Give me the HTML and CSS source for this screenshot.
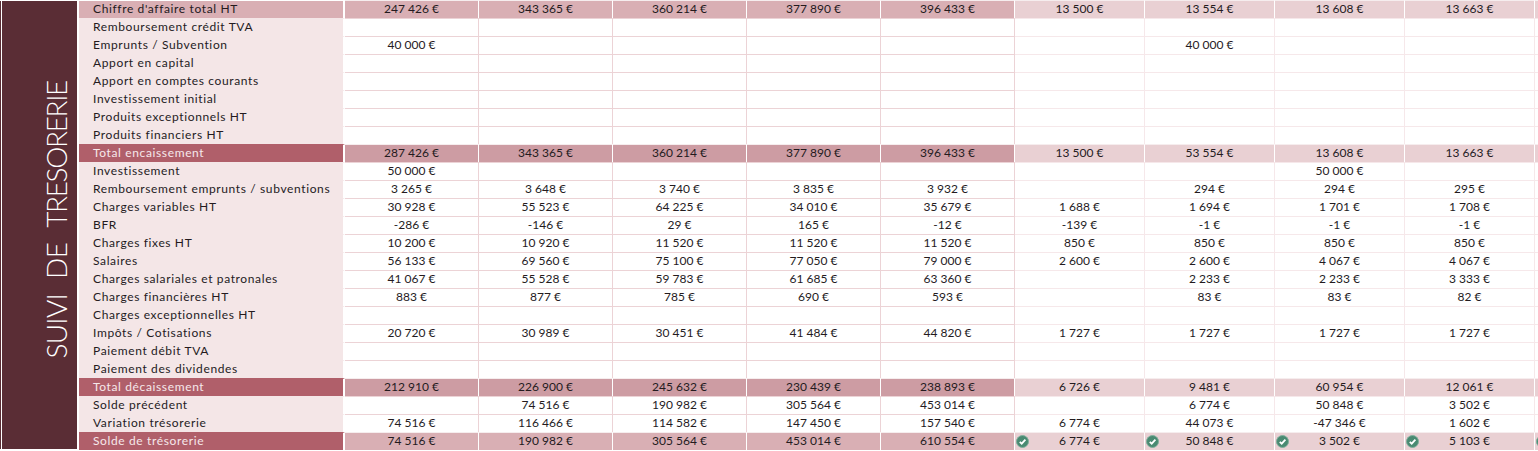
FILE: index.html
```html
<!DOCTYPE html>
<html lang="fr">
<head>
<meta charset="utf-8">
<title>Suivi de trésorerie</title>
<link rel="stylesheet" href="styles.css">
</head>
<body>
<div class="sheet">
<div class="side"><span class="side-title">SUIVI DE <span class="side-long">TRESORERIE</span></span></div>
<table class="grid">
<colgroup><col class="c-label"><col class="c-y"><col class="c-y"><col class="c-y"><col class="c-y"><col class="c-y"><col class="c-m"><col class="c-m"><col class="c-m"><col class="c-m"><col class="c-m"></colgroup>
<tbody>
<tr class="band head"><th>Chiffre d'affaire total HT</th><td>247 426 €</td><td>343 365 €</td><td>360 214 €</td><td>377 890 €</td><td>396 433 €</td><td class="m">13 500 €</td><td class="m">13 554 €</td><td class="m">13 608 €</td><td class="m">13 663 €</td><td class="m"></td></tr>
<tr><th>Remboursement crédit TVA</th><td></td><td></td><td></td><td></td><td></td><td class="m"></td><td class="m"></td><td class="m"></td><td class="m"></td><td class="m"></td></tr>
<tr><th>Emprunts / Subvention</th><td>40 000 €</td><td></td><td></td><td></td><td></td><td class="m"></td><td class="m">40 000 €</td><td class="m"></td><td class="m"></td><td class="m"></td></tr>
<tr><th>Apport en capital</th><td></td><td></td><td></td><td></td><td></td><td class="m"></td><td class="m"></td><td class="m"></td><td class="m"></td><td class="m"></td></tr>
<tr><th>Apport en comptes courants</th><td></td><td></td><td></td><td></td><td></td><td class="m"></td><td class="m"></td><td class="m"></td><td class="m"></td><td class="m"></td></tr>
<tr><th>Investissement initial</th><td></td><td></td><td></td><td></td><td></td><td class="m"></td><td class="m"></td><td class="m"></td><td class="m"></td><td class="m"></td></tr>
<tr><th>Produits exceptionnels HT</th><td></td><td></td><td></td><td></td><td></td><td class="m"></td><td class="m"></td><td class="m"></td><td class="m"></td><td class="m"></td></tr>
<tr><th>Produits financiers HT</th><td></td><td></td><td></td><td></td><td></td><td class="m"></td><td class="m"></td><td class="m"></td><td class="m"></td><td class="m"></td></tr>
<tr class="band total"><th>Total encaissement</th><td>287 426 €</td><td>343 365 €</td><td>360 214 €</td><td>377 890 €</td><td>396 433 €</td><td class="m">13 500 €</td><td class="m">53 554 €</td><td class="m">13 608 €</td><td class="m">13 663 €</td><td class="m"></td></tr>
<tr><th>Investissement</th><td>50 000 €</td><td></td><td></td><td></td><td></td><td class="m"></td><td class="m"></td><td class="m">50 000 €</td><td class="m"></td><td class="m"></td></tr>
<tr><th>Remboursement emprunts / subventions</th><td>3 265 €</td><td>3 648 €</td><td>3 740 €</td><td>3 835 €</td><td>3 932 €</td><td class="m"></td><td class="m">294 €</td><td class="m">294 €</td><td class="m">295 €</td><td class="m"></td></tr>
<tr><th>Charges variables HT</th><td>30 928 €</td><td>55 523 €</td><td>64 225 €</td><td>34 010 €</td><td>35 679 €</td><td class="m">1 688 €</td><td class="m">1 694 €</td><td class="m">1 701 €</td><td class="m">1 708 €</td><td class="m"></td></tr>
<tr><th>BFR</th><td>-286 €</td><td>-146 €</td><td>29 €</td><td>165 €</td><td>-12 €</td><td class="m">-139 €</td><td class="m">-1 €</td><td class="m">-1 €</td><td class="m">-1 €</td><td class="m"></td></tr>
<tr><th>Charges fixes HT</th><td>10 200 €</td><td>10 920 €</td><td>11 520 €</td><td>11 520 €</td><td>11 520 €</td><td class="m">850 €</td><td class="m">850 €</td><td class="m">850 €</td><td class="m">850 €</td><td class="m"></td></tr>
<tr><th>Salaires</th><td>56 133 €</td><td>69 560 €</td><td>75 100 €</td><td>77 050 €</td><td>79 000 €</td><td class="m">2 600 €</td><td class="m">2 600 €</td><td class="m">4 067 €</td><td class="m">4 067 €</td><td class="m"></td></tr>
<tr><th>Charges salariales et patronales</th><td>41 067 €</td><td>55 528 €</td><td>59 783 €</td><td>61 685 €</td><td>63 360 €</td><td class="m"></td><td class="m">2 233 €</td><td class="m">2 233 €</td><td class="m">3 333 €</td><td class="m"></td></tr>
<tr><th>Charges financières HT</th><td>883 €</td><td>877 €</td><td>785 €</td><td>690 €</td><td>593 €</td><td class="m"></td><td class="m">83 €</td><td class="m">83 €</td><td class="m">82 €</td><td class="m"></td></tr>
<tr><th>Charges exceptionnelles HT</th><td></td><td></td><td></td><td></td><td></td><td class="m"></td><td class="m"></td><td class="m"></td><td class="m"></td><td class="m"></td></tr>
<tr><th>Impôts / Cotisations</th><td>20 720 €</td><td>30 989 €</td><td>30 451 €</td><td>41 484 €</td><td>44 820 €</td><td class="m">1 727 €</td><td class="m">1 727 €</td><td class="m">1 727 €</td><td class="m">1 727 €</td><td class="m"></td></tr>
<tr><th>Paiement débit TVA</th><td></td><td></td><td></td><td></td><td></td><td class="m"></td><td class="m"></td><td class="m"></td><td class="m"></td><td class="m"></td></tr>
<tr><th>Paiement des dividendes</th><td></td><td></td><td></td><td></td><td></td><td class="m"></td><td class="m"></td><td class="m"></td><td class="m"></td><td class="m"></td></tr>
<tr class="band total"><th>Total décaissement</th><td>212 910 €</td><td>226 900 €</td><td>245 632 €</td><td>230 439 €</td><td>238 893 €</td><td class="m">6 726 €</td><td class="m">9 481 €</td><td class="m">60 954 €</td><td class="m">12 061 €</td><td class="m"></td></tr>
<tr><th>Solde précédent</th><td></td><td>74 516 €</td><td>190 982 €</td><td>305 564 €</td><td>453 014 €</td><td class="m"></td><td class="m">6 774 €</td><td class="m">50 848 €</td><td class="m">3 502 €</td><td class="m"></td></tr>
<tr><th>Variation trésorerie</th><td>74 516 €</td><td>116 466 €</td><td>114 582 €</td><td>147 450 €</td><td>157 540 €</td><td class="m">6 774 €</td><td class="m">44 073 €</td><td class="m">-47 346 €</td><td class="m">1 602 €</td><td class="m"></td></tr>
<tr class="band solde"><th>Solde de trésorerie</th><td>74 516 €</td><td>190 982 €</td><td>305 564 €</td><td>453 014 €</td><td>610 554 €</td>
<td class="m"><svg class="ok" viewBox="0 0 13 13"><circle cx="6.5" cy="6.5" r="6"/><path d="M3.8 6.9 5.7 8.7 9.4 4.6"/></svg>6 774 €</td>
<td class="m"><svg class="ok" viewBox="0 0 13 13"><circle cx="6.5" cy="6.5" r="6"/><path d="M3.8 6.9 5.7 8.7 9.4 4.6"/></svg>50 848 €</td>
<td class="m"><svg class="ok" viewBox="0 0 13 13"><circle cx="6.5" cy="6.5" r="6"/><path d="M3.8 6.9 5.7 8.7 9.4 4.6"/></svg>3 502 €</td>
<td class="m"><svg class="ok" viewBox="0 0 13 13"><circle cx="6.5" cy="6.5" r="6"/><path d="M3.8 6.9 5.7 8.7 9.4 4.6"/></svg>5 103 €</td>
<td class="m"><svg class="ok" viewBox="0 0 13 13"><circle cx="6.5" cy="6.5" r="6"/><path d="M3.8 6.9 5.7 8.7 9.4 4.6"/></svg></td></tr>
</tbody>
</table>
</div>
</body>
</html>
```
FILE: styles.css
```css
html, body {
  margin: 0;
  padding: 0;
  height: 451px;
  overflow: hidden;
  background: #fff;
}
.sheet {
  display: flex;
  align-items: flex-start;
  width: 1538px;
  height: 451px;
  padding-left: 2px;
  box-sizing: border-box;
  overflow: hidden;
  font-family: "Lato", "Liberation Sans", sans-serif;
  font-size: 12px;
  color: #241b1e;
}
.side {
  flex: none;
  width: 75px;
  height: 448px;
  margin-top: 1px;
  margin-right: 2px;
  padding-right: 7px;
  box-sizing: border-box;
  background: #5a2d35;
  box-shadow: -1px 0 0 #fff, -2px 0 0 #5a2d35;
  display: flex;
  align-items: center;
  justify-content: flex-end;
}
.side-title {
  writing-mode: vertical-rl;
  transform: rotate(180deg);
  color: #fff;
  font-weight: 300;
  font-size: 28px;
  line-height: 28px;
  letter-spacing: -0.7px;
  word-spacing: 8px;
  white-space: nowrap;
  margin-top: -10px;
}
.side-long { letter-spacing: -1.35px; }
.grid {
  flex: none;
  table-layout: fixed;
  border-collapse: separate;
  border-spacing: 0;
  width: 1456px;
}
.c-label { width: 266px; }
.c-y { width: 134px; }
.c-m { width: 130px; }
.grid tr { height: 18px; }
.grid th, .grid td {
  height: 18px;
  padding: 0 0 2px;
  box-sizing: border-box;
  line-height: 15px;
  white-space: nowrap;
  overflow: hidden;
}
.grid th {
  text-align: left;
  font-weight: 400;
  letter-spacing: 0.63px;
  padding-left: 14px;
  background: #f4e6e7;
  border-top: 1px solid #f4e6e7;
  border-right: 2px solid #fff;
}
.grid td {
  position: relative;
  text-align: center;
  letter-spacing: 0;
  border-top: 1px solid #ecd3d6;
  border-right: 1px solid #ecd3d6;
}
.grid td.m {
  border-top-color: #f6e8ea;
  border-right-color: #f6e8ea;
}
.band td, .band td.m {
  border-top-color: #f6edee;
  border-right-color: #fff;
}
.head th {
  background: #d9afb4;
  border-top-color: #fff;
}
.head td { background: #d9afb4; }
.total th, .solde th {
  background: #b05f6a;
  border-top-color: #b05f6a;
  color: #f6e8ea;
}
.total td { background: #cd9ca3; }
.solde td { background: #d9afb4; }
.band td.m { background: #e9d0d3; }
.ok {
  position: absolute;
  left: 1px;
  top: 2px;
  width: 13px;
  height: 13px;
}
.ok circle { fill: #4a8a72; stroke: #7fae9c; stroke-width: 1; }
.ok path { fill: none; stroke: #fff; stroke-width: 1.8; }
```
